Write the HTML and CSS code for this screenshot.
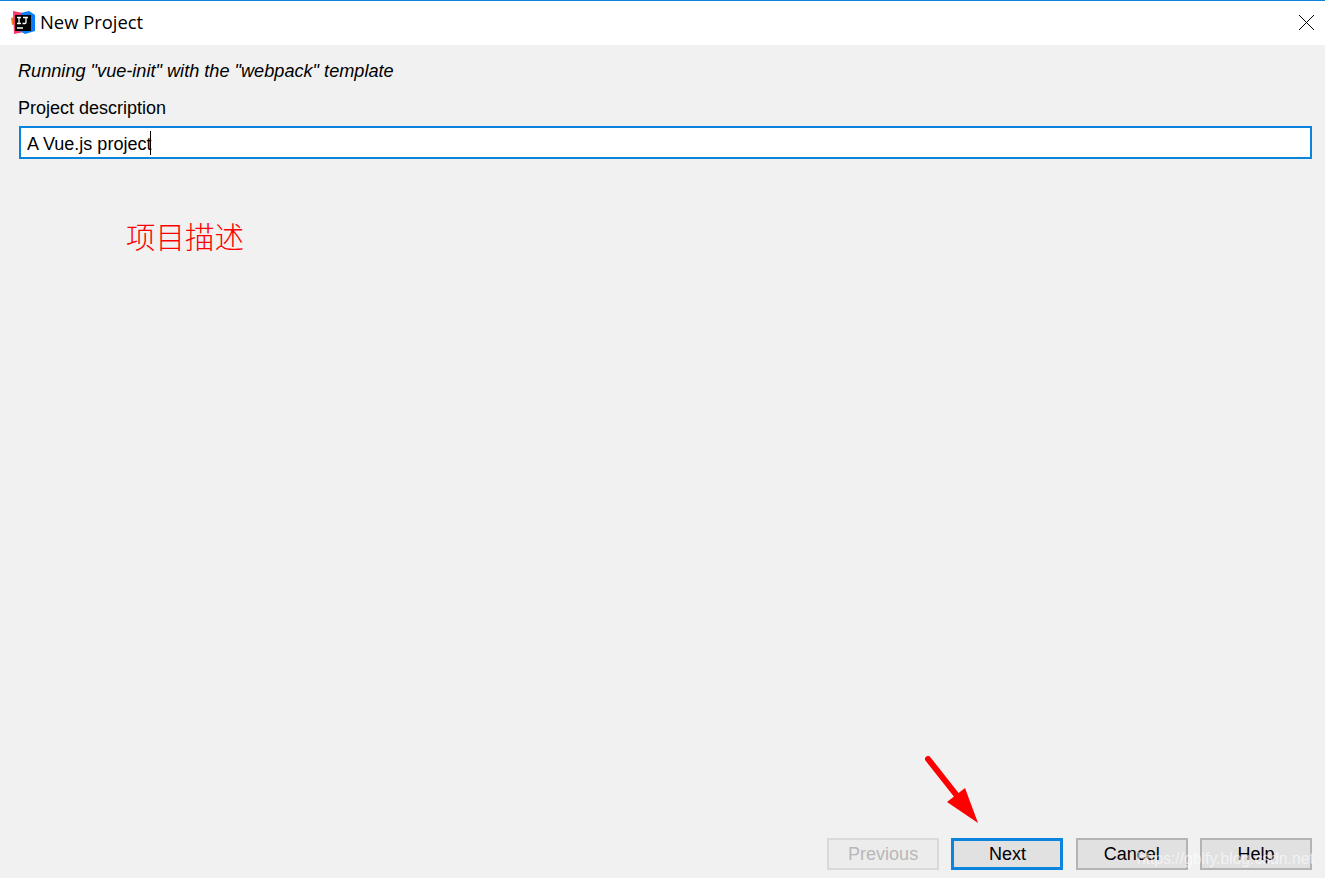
FILE: index.html
```html
<!DOCTYPE html>
<html lang="en">
<head>
<meta charset="utf-8">
<title>New Project</title>
<link rel="stylesheet" href="styles.css">
</head>
<body>
<div class="window">
  <header class="titlebar">
    <svg class="logo" width="25" height="25" viewBox="0 0 25 25">
      <path d="M0 8 L4 7 L5 14 L1 15Z" fill="#f97a12"/>
      <path d="M2 1 L12 3 L13 22 L3 24Z" fill="#f5386f"/>
      <path d="M10 3 L18 1 L24 5 L24 21 L14 24 L9 21Z" fill="#087cfa"/>
      <rect x="4" y="5" width="16" height="16" fill="#000"/>
      <path class="logo-mark" d="M6 7.5h4M8 7.5v6M6 13.5h4M12 7.5h5M15 7.5v5q0 1-1 1h-2.5M6 18h6"/>
    </svg>
    <span class="title">New Project</span>
    <svg class="close" width="15" height="15" viewBox="0 0 15 15"><path d="M0 0L15 15M15 0L0 15"/></svg>
  </header>
  <main class="content">
    <p class="intro">Running "vue-init" with the "webpack" template</p>
    <label class="field-label" for="desc">Project description</label>
    <div class="input" id="desc"><span class="input-text">A Vue.js project</span><i class="caret"></i></div>
  </main>
  <footer class="actions">
    <button class="btn" disabled>Previous</button>
    <button class="btn btn-default">Next</button>
    <button class="btn">Cancel</button>
    <button class="btn">Help</button>
  </footer>
</div>
<div class="note">项目描述</div>
<svg class="arrow" width="60" height="70" viewBox="0 0 60 70">
  <path class="arrow-shaft" d="M3 3L33 41"/>
  <path class="arrow-head" d="M22 46L40 32L53 67Z"/>
</svg>
<div class="watermark">https://gblfy.blog.csdn.net</div>
</body>
</html>
```
FILE: styles.css
```css
* { box-sizing: border-box; }
html, body { margin: 0; height: 100%; overflow: hidden; }
body { position: relative; background: #f1f1f1; font-family: "Liberation Sans", Arial, sans-serif; color: #000; }
.window { display: flex; flex-direction: column; height: 878px; }
.titlebar { display: flex; align-items: center; height: 45px; flex: none; background: #fff; border-top: 1px solid #0a84dc; padding: 0 11px 2px 11px; }
.logo { flex: none; margin-right: 4px; }
.logo-mark { fill: none; stroke: #fff; stroke-width: 1.3; }
.title { font-family: "Open Sans", "Noto Sans", sans-serif; font-size: 18.4px; line-height: 24px; flex: 1; color: #000; }
.close { flex: none; }
.close path { stroke: #000; stroke-width: 1; fill: none; }
.content { flex: 1; padding: 16px 13px 0 18px; }
.intro { margin: 0; font-size: 18.15px; font-style: italic; line-height: 20px; }
.field-label { display: block; margin-top: 17px; font-size: 18px; line-height: 20px; }
.input { display: flex; align-items: center; height: 33px; margin: 8px 0 0 1px; padding: 0 6px; background: #fff; border: 2px solid #0a84dc; font-size: 18px; }
.input-text { padding-top: 3px; }
.caret { display: block; width: 1px; height: 24px; background: #000; margin-left: -1px; }
.actions { display: flex; flex: none; justify-content: flex-end; gap: 12.3px; padding: 0 13px 8px 0; }
.btn { width: 112px; height: 32px; padding: 0; background: #e1e1e1; border: 2px solid #b4b4b4; font: 18px "Liberation Sans", Arial, sans-serif; color: #000; }
.btn:disabled { background: #ececec; border-color: #d9d9d9; color: #b8b8b8; }
.btn-default { border: 3px solid #0a84dc; }
.note { position: absolute; left: 126px; top: 214px; font-family: "Noto Sans CJK SC", sans-serif; font-weight: 300; font-size: 29.5px; line-height: 42px; color: #fe0000; }
.arrow { position: absolute; left: 925px; top: 756px; }
.arrow-shaft { stroke: #fe0000; stroke-width: 6; stroke-linecap: round; fill: none; }
.arrow-head { fill: #fe0000; }
.watermark { position: absolute; left: 1137px; top: 849px; font-size: 15.7px; line-height: 20px; color: rgba(255,255,255,.6); white-space: nowrap; }
```
